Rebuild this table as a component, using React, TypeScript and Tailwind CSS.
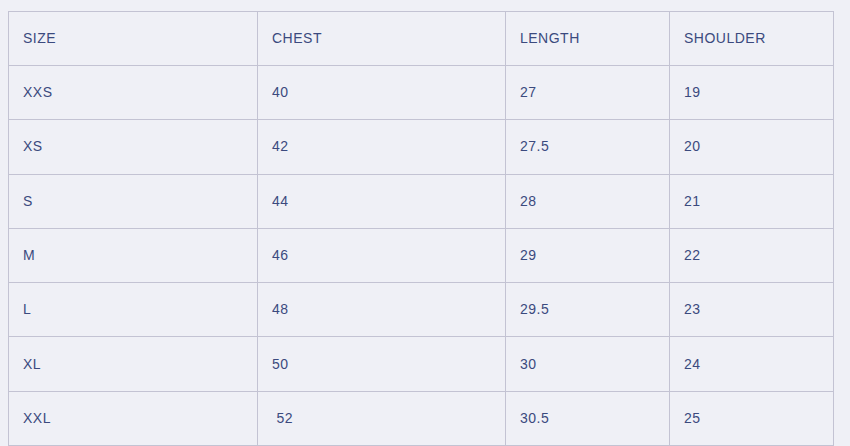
const rows = [
  ["XXS", "40", "27", "19"],
  ["XS", "42", "27.5", "20"],
  ["S", "44", "28", "21"],
  ["M", "46", "29", "22"],
  ["L", "48", "29.5", "23"],
  ["XL", "50", "30", "24"],
  ["XXL", "\u00a052", "30.5", "25"],
];

export default function App() {
  return (
    <div className="min-h-screen bg-[#eff0f6] pt-[11px] pl-2 font-['Liberation_Sans',Arial,sans-serif]">
      <table className="w-[825px] border-collapse table-fixed text-[14px] text-[#3b4a7e] tracking-[0.5px]">
        <colgroup>
          <col className="w-[249px]" />
          <col className="w-[248px]" />
          <col className="w-[164px]" />
          <col className="w-[164px]" />
        </colgroup>
        <thead>
          <tr className="h-[54px]">
            {["SIZE", "CHEST", "LENGTH", "SHOULDER"].map((h) => (
              <th key={h} className="border border-[#c3c3d3] px-[14px] text-left font-normal">
                {h}
              </th>
            ))}
          </tr>
        </thead>
        <tbody>
          {rows.map((r) => (
            <tr key={r[0]} className="h-[54.3px]">
              {r.map((c, i) => (
                <td key={i} className="border border-[#c3c3d3] px-[14px]">
                  {c}
                </td>
              ))}
            </tr>
          ))}
        </tbody>
      </table>
    </div>
  );
}
